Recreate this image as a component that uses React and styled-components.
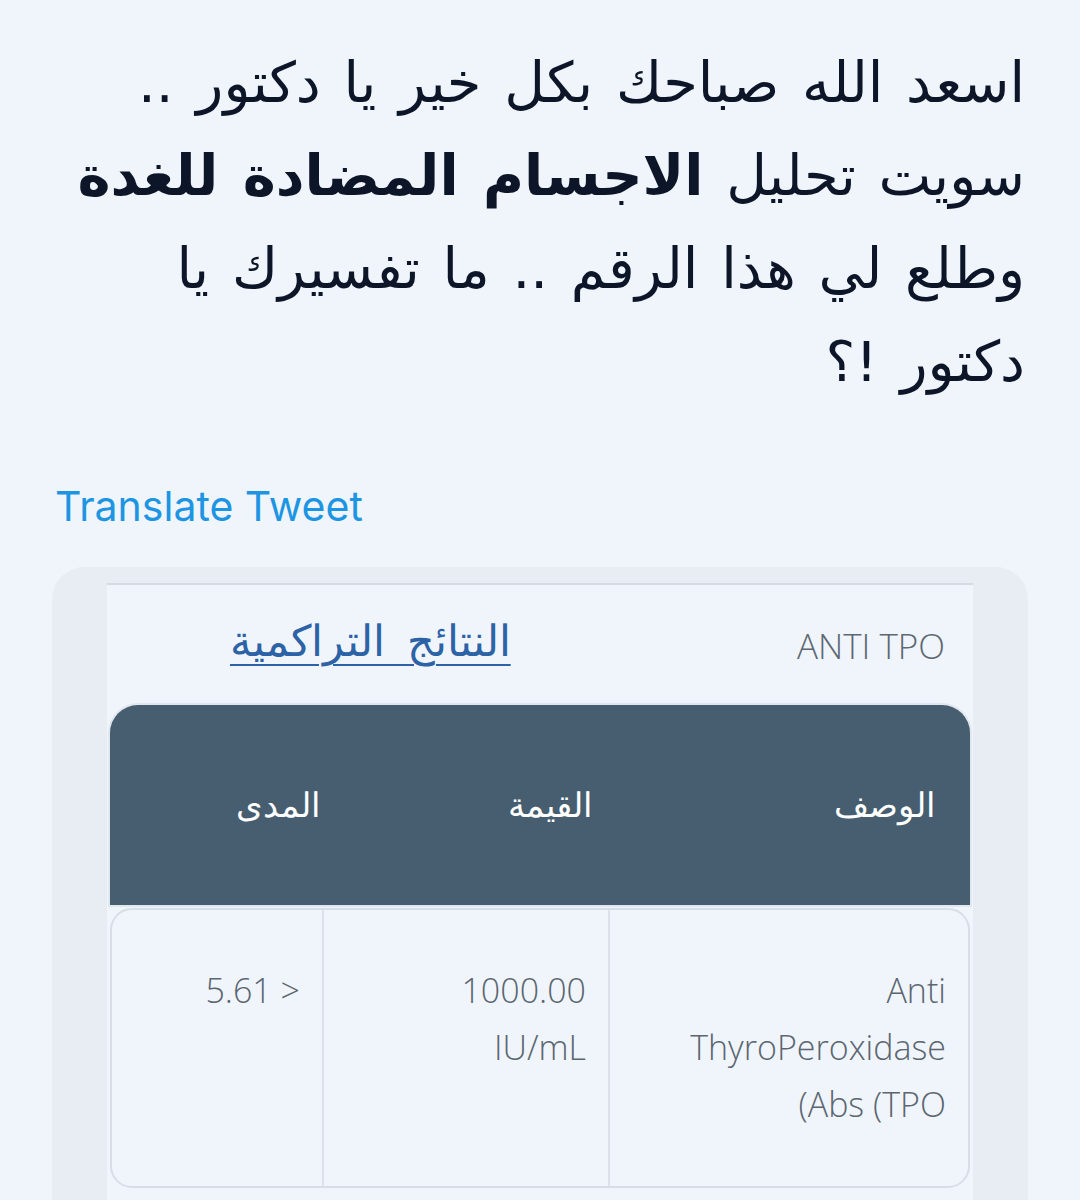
import React from "react";
import styled, { createGlobalStyle } from "styled-components";

const GlobalStyle = createGlobalStyle`
  html, body {
    margin: 0;
    padding: 0;
    background: #f0f5fb;
  }
  body {
    font-family: "DejaVu Sans", "Noto Sans", sans-serif;
  }
`;

const rows = [
  {
    desc: ["Anti", "ThyroPeroxidase", "(Abs (TPO"],
    value: ["1000.00", "IU/mL"],
    range: ["5.61 >"],
  },
];

function App() {
  return (
    <Page>
      <GlobalStyle />
      <TweetText dir="rtl">
        اسعد الله صباحك بكل خير يا دكتور ..
        <br />
        سويت تحليل <strong>الاجسام المضادة للغدة</strong>
        <br />
        وطلع لي هذا الرقم .. ما تفسيرك يا
        <br />
        دكتور !؟
      </TweetText>

      <Translate>Translate Tweet</Translate>

      <MediaCard>
        <Screen>
          <TestHeader>
            <HistoryLink dir="rtl">النتائج التراكمية</HistoryLink>
            <TestName>ANTI TPO</TestName>
          </TestHeader>

          <Table dir="rtl">
            <HeadRow>
              <HeadCell>الوصف</HeadCell>
              <HeadCell>القيمة</HeadCell>
              <HeadCell $pad="6px">المدى</HeadCell>
            </HeadRow>
            {rows.map((r, i) => (
              <BodyRow key={i}>
                <Cell $pad="22px">
                  {r.desc.map((l) => (
                    <div key={l} dir="ltr">{l}</div>
                  ))}
                </Cell>
                <Cell $divider>
                  {r.value.map((l) => (
                    <div key={l} dir="ltr">{l}</div>
                  ))}
                </Cell>
                <Cell $divider>
                  {r.range.map((l) => (
                    <div key={l} dir="ltr">{l}</div>
                  ))}
                </Cell>
              </BodyRow>
            ))}
          </Table>
        </Screen>
      </MediaCard>
    </Page>
  );
}

const Page = styled.div`
  width: 1080px;
  height: 1200px;
  overflow: hidden;
  background: #f0f5fb;
`;

const TweetText = styled.p`
  margin: 0;
  padding: 36px 55px 0;
  text-align: right;
  font-family: "DejaVu Sans", sans-serif;
  font-size: 56px;
  line-height: 93px;
  word-spacing: 5px;
  color: #0d1628;

  strong {
    font-weight: 700;
  }
`;

const Translate = styled.div`
  margin: 74px 0 0 55px;
  font-family: Inter, "Liberation Sans", sans-serif;
  font-size: 41px;
  line-height: 48px;
  color: #1d95e3;
`;

const MediaCard = styled.div`
  margin: 37px 52px 0;
  height: 700px;
  padding: 16px 55px 0;
  background: #e8edf4;
  border-radius: 32px 32px 0 0;
`;

const Screen = styled.div`
  height: 100%;
  background: #f0f5fb;
  border-top: 2px solid #d5dbe3;
  padding: 0 3px;
`;

const TestHeader = styled.div`
  height: 120px;
  display: flex;
  align-items: center;
  justify-content: space-between;
  padding: 0 25px 0 120px;
`;

const HistoryLink = styled.a`
  font-family: "DejaVu Sans", sans-serif;
  font-weight: 200;
  font-size: 43px;
  word-spacing: 8px;
  color: #2c62a6;
  text-decoration: underline;
  text-underline-offset: 8px;
  text-decoration-thickness: 2px;
  margin-top: -8px;
`;

const TestName = styled.div`
  font-family: "Open Sans", sans-serif;
  font-weight: 300;
  font-size: 35px;
  color: #5e6873;
`;

const Table = styled.div`
  display: flex;
  flex-direction: column;
  gap: 3px;
`;

const columns = "358px 286px 1fr";

const HeadRow = styled.div`
  display: grid;
  grid-template-columns: ${columns};
  height: 200px;
  background: #465e6f;
  border-radius: 28px 28px 0 0;
  box-shadow: 0 0 0 2px #e1e7ee;
`;

const HeadCell = styled.div`
  display: flex;
  align-items: center;
  padding-right: ${(p) => p.$pad || "20px"};
  font-family: "DejaVu Sans", sans-serif;
  font-weight: 200;
  font-size: 34px;
  color: #ffffff;
  &:first-child {
    padding-right: 35px;
  }
`;

const BodyRow = styled.div`
  display: grid;
  grid-template-columns: ${columns};
  height: 280px;
  border: 2px solid #d8dee6;
  border-radius: 22px;
  box-sizing: border-box;
`;

const Cell = styled.div`
  padding: 52px ${(p) => p.$pad || "22px"} 0;
  text-align: right;
  border-right: ${(p) => (p.$divider ? "2px solid #dce2e9" : "none")};
  font-family: "Open Sans", sans-serif;
  font-weight: 300;
  font-size: 34px;
  line-height: 57px;
  color: #5b6671;
`;

export default App;
